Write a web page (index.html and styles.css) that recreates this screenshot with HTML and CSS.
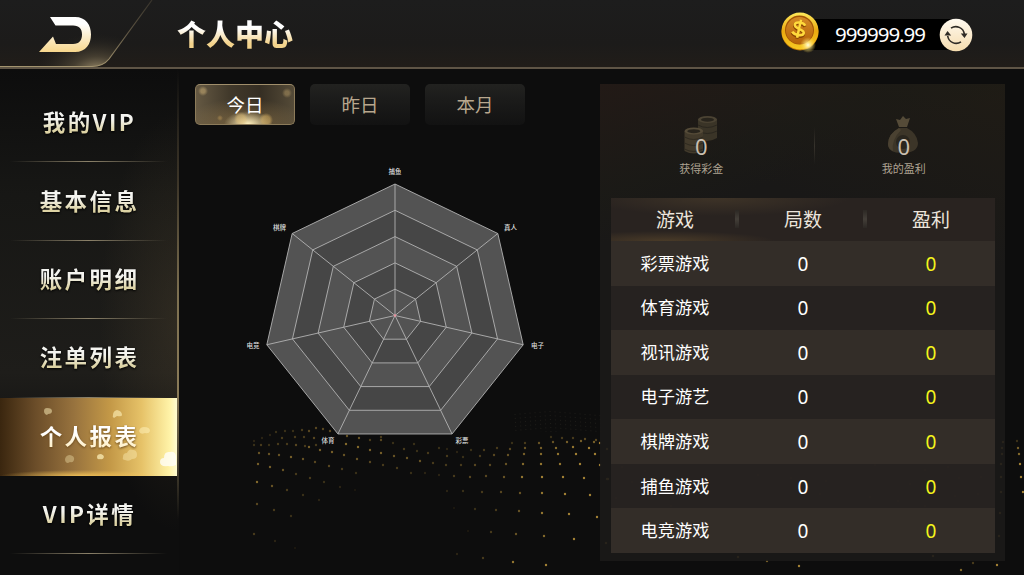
FILE: index.html
```html
<!DOCTYPE html>
<html lang="zh-CN">
<head>
<meta charset="UTF-8">
<meta name="viewport" content="width=device-width, initial-scale=1.0">
<title>个人中心</title>
<link rel="stylesheet" href="styles.css">
</head>
<body>
<svg class="particles" id="particles" width="1024" height="575" viewBox="0 0 1024 575"></svg>

<header class="header">
    <svg class="header-back" width="156" height="69" viewBox="0 0 156 69">
        <defs>
            <radialGradient id="cornerGlow" gradientUnits="userSpaceOnUse" cx="97" cy="72" r="62" gradientTransform="translate(0 28) scale(1 .6)">
                <stop offset="0" stop-color="#a39371"/>
                <stop offset=".4" stop-color="#554c3a" stop-opacity=".7"/>
                <stop offset="1" stop-color="#2a2721" stop-opacity="0"/>
            </radialGradient>
            <linearGradient id="edge" x1="0" y1="1" x2="0" y2="0">
                <stop offset="0" stop-color="#a3946f"/>
                <stop offset=".5" stop-color="#5e5543"/>
                <stop offset="1" stop-color="#37332b"/>
            </linearGradient>
            <linearGradient id="arrow" x1="0" y1="0" x2="0" y2="1">
                <stop offset=".2" stop-color="#ffffff"/>
                <stop offset="1" stop-color="#f7d68c"/>
            </linearGradient>
        </defs>
        <path d="M0 66.500H92Q103 66.500 109 59L152 0H0Z" fill="url(#cornerGlow)"/>
        <path d="M0 66.500H92Q103 66.500 109 59L152 0" fill="none" stroke="url(#edge)" stroke-width="1.200"/>
        <path d="M50 17H75C86 17 91 25 91 34.500C91 44 86 52 75 52H39L53 36.500L56 44H73C79.500 44 82 40 82 34.500C82 29 79.500 25.500 73 25.500H55.500Z" fill="url(#arrow)"/>
    </svg>
    <h1 class="header-title">个人中心</h1>
    <div class="balance">
        <svg class="balance-coin" width="40" height="42" viewBox="0 0 40 42">
            <defs>
                <linearGradient id="rim" x1="0" y1="0" x2="0" y2="1">
                    <stop offset="0" stop-color="#ffe95a"/>
                    <stop offset=".5" stop-color="#eaa910"/>
                    <stop offset="1" stop-color="#f8c922"/>
                </linearGradient>
                <linearGradient id="face" x1="0" y1="0" x2="0" y2="1">
                    <stop offset="0" stop-color="#d48a25"/>
                    <stop offset="1" stop-color="#b5620a"/>
                </linearGradient>
                <radialGradient id="spark">
                    <stop offset="0" stop-color="#fffde0"/>
                    <stop offset=".4" stop-color="#ffe98a" stop-opacity=".7"/>
                    <stop offset="1" stop-color="#ffd84a" stop-opacity="0"/>
                </radialGradient>
            </defs>
            <circle cx="20" cy="21" r="18.500" fill="#c07a08"/>
            <circle cx="20" cy="20" r="18.500" fill="url(#rim)"/>
            <circle cx="19.500" cy="19" r="14.500" fill="#a35407"/>
            <circle cx="19.500" cy="19.500" r="13.500" fill="url(#face)"/>
            <g fill="none" transform="rotate(12 19 18)">
                <path d="M24.500 14.500C22 11.500 14 12 14 15.500C14 20 24.500 18 24.500 22C24.500 26 15.500 26 13 23M19 9.500V28" stroke="#8a4504" stroke-width="3.200"/>
                <path d="M24.500 13.500C22 10.500 14 11 14 14.500C14 19 24.500 17 24.500 21C24.500 25 15.500 25 13 22M19 8.500V27" stroke="#ffd93c" stroke-width="2.600"/>
            </g>
            <circle cx="28" cy="34" r="8" fill="url(#spark)"/>
        </svg>
        <span class="balance-value">999999.99</span>
        <svg class="balance-refresh" width="34" height="34" viewBox="0 0 34 34">
            <defs>
                <linearGradient id="refreshBg" x1="0" y1="0" x2="0" y2="1">
                    <stop offset="0" stop-color="#fffaf0"/>
                    <stop offset="1" stop-color="#f5dcae"/>
                </linearGradient>
            </defs>
            <circle cx="17" cy="17" r="16.300" fill="url(#refreshBg)"/>
            <path d="M12 10.200A8.500 8.500 0 0 1 25.300 16M22 23.800A8.500 8.500 0 0 1 8.700 18" fill="none" stroke="#2f2b26" stroke-width="1.600"/>
            <path d="M21.800 15.500H28.500L25.500 20ZM12.200 17.500H5.500L8.500 13Z" fill="#2f2b26"/>
        </svg>
    </div>
</header>

<div class="page">
    <nav class="sidebar">
        <a class="sidebar-item"><span>我的VIP</span></a>
        <a class="sidebar-item"><span>基本信息</span></a>
        <a class="sidebar-item"><span>账户明细</span></a>
        <a class="sidebar-item"><span>注单列表</span></a>
        <a class="sidebar-item active">
            <svg class="petals" width="177" height="79" viewBox="0 0 177 79">
                <g fill="#fff3bd">
                    <path d="M44 13q0-3 3-3 5 0 5 3 0 3-4 3l-1 1q-3-1-3-4z" opacity=".5"/>
                    <path d="M113 17q0-4 4-5 5 1 5 5 0 2-5 1l-3 2q-2-1-1-3z" opacity=".6"/>
                    <path d="M65 61q1-4 5-4 5 1 4 5-1 3-4 2l-2 1q-3 0-3-4z" opacity=".35"/>
                    <path d="M97 59q0-3 4-3 3 1 3 3-1 3-4 2-3 1-3-2z" opacity=".7"/>
                    <path d="M123 59q0-4 4-4 2-5 6-3 4 0 4 5 0 4-5 4-3 3-7 1-3 0-2-3z" opacity=".4"/>
                    <path d="M139 33q1-4 5-4 6 0 6 4-1 3-5 2-5 2-6-2z" opacity=".5"/>
                    <path d="M160 64q0-4 4-4 0-7 6-6 5-1 6 4v9q-4 2-8 1-8 1-8-4z" fill="#ffffff" opacity=".75"/>
                </g>
            </svg>
            <span>个人报表</span>
        </a>
        <a class="sidebar-item"><span>VIP详情</span></a>
    </nav>

    <main class="report">
        <div class="tabs">
            <button class="tab active">今日</button>
            <button class="tab">昨日</button>
            <button class="tab">本月</button>
        </div>
        <svg class="radar" id="radar" width="330" height="300" viewBox="230 160 330 300"></svg>
    </main>

    <section class="panel">
        <div class="summary">
            <div class="summary-item">
                <svg class="summary-icon" width="36" height="40" viewBox="0 0 36 40">
                    <path d="M15 4V24Q24 29 34 23V4Z" fill="#3a3427"/>
                    <ellipse cx="24.500" cy="4.500" rx="9.500" ry="3.500" fill="#4b4333"/>
                    <ellipse cx="24.500" cy="4.700" rx="6.500" ry="2" fill="#28241c"/>
                    <path d="M15 10q9 5 19 0M15 16q9 5 19 0" fill="none" stroke="#2a261e"/>
                    <path d="M1.500 16V36Q11 41 20 36V16Z" fill="#423a2b"/>
                    <ellipse cx="10.800" cy="16" rx="9.300" ry="3.500" fill="#554b38"/>
                    <ellipse cx="10.800" cy="16.200" rx="6.500" ry="2" fill="#28241c"/>
                    <path d="M1.500 22q9 5 18.500 0M1.500 28q9 5 18.500 0M1.500 34q9 5 18.500 0" fill="none" stroke="#2f2a20"/>
                </svg>
                <div class="summary-value">0</div>
                <div class="summary-label">获得彩金</div>
            </div>
            <div class="summary-item">
                <svg class="summary-icon" width="36" height="40" viewBox="0 0 36 40">
                    <path d="M13 12L10 4L14 5L17 1L20 4L24 3L21 12Z" fill="#554b38"/>
                    <path d="M13 13Q2 19 2 29Q2 38 16 38Q32 38 32 28Q31 18 21 13Z" fill="#3c3528"/>
                    <path d="M13 13Q2 19 2 29Q2 34 7 36Q5 25 15 15Z" fill="#4a4131"/>
                    <circle cx="17" cy="27" r="7" fill="#2a261e"/>
                </svg>
                <div class="summary-value">0</div>
                <div class="summary-label">我的盈利</div>
            </div>
        </div>
        <table class="games">
            <thead>
                <tr><th>游戏</th><th>局数</th><th>盈利</th></tr>
            </thead>
            <tbody>
                <tr><td>彩票游戏</td><td>0</td><td>0</td></tr>
                <tr><td>体育游戏</td><td>0</td><td>0</td></tr>
                <tr><td>视讯游戏</td><td>0</td><td>0</td></tr>
                <tr><td>电子游艺</td><td>0</td><td>0</td></tr>
                <tr><td>棋牌游戏</td><td>0</td><td>0</td></tr>
                <tr><td>捕鱼游戏</td><td>0</td><td>0</td></tr>
                <tr><td>电竞游戏</td><td>0</td><td>0</td></tr>
            </tbody>
        </table>
    </section>
</div>

<script src="script.js"></script>
</body>
</html>
```
FILE: styles.css
```css
* {
    box-sizing: border-box;
}
body {
    width: 1024px;
    height: 575px;
    margin: 0;
    overflow: hidden;
    position: relative;
    background-color: #0d0d0d;
    color: #ffffff;
    font-family: "Noto Sans", "Noto Sans CJK SC", sans-serif;
}
.particles {
    position: absolute;
    left: 0;
    top: 0;
}

/* header */
.header {
    display: flex;
    align-items: center;
    position: relative;
    height: 69px;
    background: linear-gradient(#1d1d1d, #1c1b1a 65%, #211d19);
    border-bottom: 2px solid #5f5546;
}
.header-back {
    align-self: flex-start;
    flex: none;
}
.header-title {
    margin: 0 0 0 21px;
    font-family: "Noto Sans CJK SC", sans-serif;
    font-size: 29px;
    font-weight: 900;
    line-height: 44px;
    padding-bottom: 1px;
    background: linear-gradient(#ffffff 38%, #f3d38c 72%);
    -webkit-background-clip: text;
    background-clip: text;
    color: transparent;
}
.balance {
    display: flex;
    align-items: center;
    width: 193px;
    height: 31px;
    margin-left: auto;
    margin-right: 51px;
    margin-top: 2px;
    background: linear-gradient(90deg, transparent 8%, #000000 8%, #000000 92%, transparent 92%);
}
.balance-coin {
    flex: none;
    margin-top: -5px;
}
.balance-value {
    flex: 1;
    padding-left: 15px;
    font-size: 20.5px;
    letter-spacing: -1.05px;
    line-height: 31px;
}
.balance-refresh {
    flex: none;
}

.page {
    display: flex;
    position: relative;
    height: 506px;
}

/* left menu */
.sidebar {
    position: relative;
    width: 179px;
    flex: none;
    padding-top: 15px;
    background:
        radial-gradient(ellipse 80px 210px at 100% 50%, rgba(90, 76, 52, 0.3), transparent),
        linear-gradient(#0d0d0d, #171715 25%, #1e1d1a 60%, #0e0e0e 80%);
}
.sidebar::after {
    content: "";
    position: absolute;
    right: 0;
    top: 0;
    width: 2px;
    height: 450px;
    background: linear-gradient(transparent, #3c3528 25%, #7d7051 50%, #8a7b58 72%, transparent);
}
.sidebar-item {
    display: flex;
    align-items: center;
    justify-content: center;
    position: relative;
    width: 177px;
    height: 78.4px;
    padding-bottom: 4px;
    font-family: "Noto Sans CJK SC", sans-serif;
    font-size: 22.5px;
    font-weight: 700;
    letter-spacing: 2.4px;
    line-height: 36px;
}
.sidebar-item::after {
    content: "";
    position: absolute;
    left: 10px;
    right: 10px;
    bottom: 0;
    height: 1px;
    background: linear-gradient(90deg, transparent, #8b8169 50%, transparent);
}
.sidebar-item span {
    position: relative;
    padding-left: 2px;
    background: linear-gradient(#f4f4f0 45%, #ddd3a4 78%);
    -webkit-background-clip: text;
    background-clip: text;
    color: transparent;
    filter: drop-shadow(0 1px 1px #000000);
}
.sidebar-item.active {
    background:
        radial-gradient(ellipse 80px 6px at 45% 100%, rgba(255, 205, 90, 0.8), transparent),
        linear-gradient(90deg, #3a260f 0%, #6b4d29 20%, #98733e 42%, #c39847 62%, #e6c268 80%, #fff3a8 96%, #fffbd0);
}
.sidebar-item.active::after {
    display: none;
}
.sidebar-item.active span {
    background-image: linear-gradient(#ffffff 45%, #fff2cf 78%);
    filter: drop-shadow(0 1px 1px #6b4a1c);
}
.petals {
    position: absolute;
    left: 0;
    top: 0;
    filter: blur(0.6px);
}

/* radar */
.report {
    width: 421px;
    flex: none;
    padding: 15px 0 0 16px;
}
.tabs {
    display: flex;
    gap: 15px;
}
.tab {
    width: 100px;
    height: 41px;
    padding: 0 0 1px;
    border: none;
    border-radius: 5px;
    background: linear-gradient(#222220, #1b1b1a 40%, #121212);
    color: #b8a78e;
    font-family: "Noto Sans CJK SC", sans-serif;
    font-size: 18.5px;
}
.tab.active {
    border: 1px solid #8c7b5a;
    border-top-color: #a08e6b;
    background:
        radial-gradient(circle at 7px 6px, rgba(210, 180, 120, 0.5) 2px, transparent 5px),
        radial-gradient(circle at 91px 8px, rgba(200, 170, 110, 0.4) 2px, transparent 5px),
        radial-gradient(circle at 45px 34px, rgba(230, 195, 120, 0.45) 4px, transparent 7px),
        radial-gradient(circle at 70px 35px, rgba(220, 180, 100, 0.5) 4px, transparent 7px),
        radial-gradient(circle at 24px 33px, rgba(200, 160, 90, 0.4) 1px, transparent 3px),
        radial-gradient(ellipse 24px 13px at 52px 100%, #fff0bd, transparent),
        radial-gradient(ellipse 60px 26px at 50% 100%, rgba(160, 130, 80, 0.6), transparent),
        linear-gradient(90deg, #655943, #40382a 35%, #352e23 65%, #554b38);
    color: #ffffff;
}
.radar {
    display: block;
    margin: 35px 0 0 35px;
}
.radar text {
    fill: #dcdcdc;
    font-family: "Noto Sans CJK SC", sans-serif;
    font-size: 6.5px;
    font-weight: 500;
    text-anchor: middle;
}

/* right panel */
.panel {
    width: 405px;
    height: 477px;
    flex: none;
    margin-top: 15px;
    padding: 0 10px 0 11px;
    background:
        linear-gradient(160deg, rgba(35, 26, 22, 0.9), rgba(28, 27, 22, 0.6) 18%, transparent 26%),
        linear-gradient(200deg, rgba(32, 28, 21, 0.9), transparent 30%),
        rgba(27, 25, 24, 0.9);
}
.summary {
    display: flex;
    height: 114px;
    margin: 0 -10px 0 -11px;
    padding-top: 31px;
}
.summary-item {
    position: relative;
    flex: 1;
    text-align: center;
    color: #c9bfb0;
}
.summary-item + .summary-item::before {
    content: "";
    position: absolute;
    left: 11px;
    top: 12px;
    width: 1px;
    height: 38px;
    background: linear-gradient(transparent, #37332c, transparent);
}
.summary-icon {
    display: block;
    margin: 0 auto;
}
.summary-value {
    margin-top: -24px;
    font-size: 22px;
    line-height: 30px;
}
.summary-label {
    margin-top: -1px;
    font-family: "Noto Sans CJK SC", sans-serif;
    font-size: 11px;
    line-height: 16px;
    color: #aea392;
}
.games {
    width: 384px;
    table-layout: fixed;
    border-collapse: separate;
    border-spacing: 0;
    text-align: center;
}
.games thead {
    background:
        radial-gradient(ellipse 130px 18px at 28% 0, rgba(82, 67, 46, 0.5), transparent),
        radial-gradient(ellipse 110px 10px at 14% 100%, rgba(100, 78, 46, 0.55), transparent),
        #292320;
}
.games th {
    position: relative;
    height: 43px;
    padding: 0 0 1px;
    font-size: 19px;
    font-weight: 400;
    color: #ece5dc;
}
.games th + th::before {
    content: "";
    position: absolute;
    left: -4px;
    top: 12px;
    width: 4px;
    height: 18px;
    background: linear-gradient(#2c2824, #433e38, #2c2824);
}
.games td {
    height: 44.57px;
    padding: 1px 0 0;
    font-size: 17.2px;
    line-height: 26px;
    color: #ffffff;
}
.games td + td {
    font-size: 19px;
}
.games td:last-child {
    color: #f4f41c;
}
.games tbody tr {
    background-color: rgba(40, 35, 33, 0.9);
}
.games tbody tr:nth-child(odd) {
    background-color: #332d28;
}
```
FILE: script.js
```js
var NS = 'http://www.w3.org/2000/svg';

function add(parent, tag, attrs) {
    var el = document.createElementNS(NS, tag);
    for (var key in attrs) {
        el.setAttribute(key, attrs[key]);
    }
    parent.appendChild(el);
    return el;
}

// radar chart
var radar = document.getElementById('radar');
var cx = 395, cy = 315.5, radius = 131.5;
var labels = [
    ['捕鱼', 395, 174],
    ['真人', 510.5, 230],
    ['电子', 537.5, 348],
    ['彩票', 462, 442.5],
    ['体育', 328, 442.5],
    ['电竞', 253, 348],
    ['棋牌', 279.5, 230]
];

function corner(i, r) {
    var a = Math.PI * 2 * i / 7;
    return [cx + Math.sin(a) * r, cy - Math.cos(a) * r];
}

for (var level = 5; level > 0; level--) {
    var points = [];
    for (var i = 0; i < 7; i++) {
        points.push(corner(i, radius * level / 5).join(','));
    }
    add(radar, 'polygon', {
        points: points.join(' '),
        fill: level % 2 ? '#535353' : '#464646',
        stroke: '#b2b2b2',
        'stroke-width': 0.9
    });
}
for (var j = 0; j < 7; j++) {
    var p = corner(j, radius);
    add(radar, 'line', {x1: cx, y1: cy, x2: p[0], y2: p[1], stroke: '#b2b2b2', 'stroke-width': 0.9});
    add(radar, 'text', {x: labels[j][1], y: labels[j][2]}).textContent = labels[j][0];
}
add(radar, 'circle', {cx: cx, cy: cy, r: 1.2, fill: '#e8909c'});

// gold particles: x, y, opacity
var dots = [
    [254,445,.3],[261,445,.4],[269,445,.3],[278,444,.4],[287,444,.4],[296,445,.5],[305,446,.4],[316,445,.4],[254,441,.2],[262,438,.2],[270,435,.2],[276,432,.3],[285,431,.3],[293,431,.3],[302,430,.4],[309,431,.5],[316,428,.5],[323,429,.5],[330,431,.5],
    [282,438,.4],[295,437,.4],[304,437,.4],[314,438,.5],[347,436,.6],[359,438,.6],[370,440,.4],[381,437,.4],
    [259,453,.6],[269,454,.6],[279,455,.6],[291,457,.7],[303,459,.6],[315,462,.5],[329,466,.5],[342,469,.4],[356,473,.3],
    [309,447,.7],[320,450,.7],[332,452,.7],[344,455,.6],[357,459,.6],[370,462,.5],[383,465,.4],[397,468,.4],[411,473,.3],[425,473,.2],[439,475,.2],
    [346,444,.8],[358,447,.8],[370,450,.7],[381,453,.7],[394,456,.6],[407,458,.6],[420,461,.6],[433,463,.4],[446,465,.4],[454,476,.4],[470,477,.5],[486,476,.5],[504,477,.6],[522,477,.9],[542,477,1],[563,477,1],[584,478,1],[607,479,1],
    [381,440,.5],[393,443,.3],[404,449,.4],[414,444,.3],[417,451,.3],[428,453,.4],[439,448,.3],[447,456,.4],[461,465,.4],[475,465,.5],[490,465,.5],[506,464,.6],[523,464,.8],[541,464,.9],[560,464,.9],[580,464,1],[600,465,1],
    [447,449,.2],[457,452,.2],[463,457,.3],[471,450,.3],[480,456,.4],[494,455,.5],[508,455,.6],[524,454,.7],[541,454,.8],[558,454,.9],[576,454,1],[595,454,1],
    [484,450,.4],[497,448,.4],[510,449,.5],[525,448,.6],[541,448,.7],[556,448,.8],[573,447,.9],[589,448,1],
    [512,443,.3],[525,443,.4],[539,443,.6],[553,442,.6],[567,442,.7],[581,441,.7],[594,442,.7],[551,437,.3],[562,438,.4],[573,438,.4],[585,439,.5],[596,440,.5],
    [258,464,.7],[270,467,.7],[283,470,.6],[296,474,.4],[310,478,.4],[324,482,.3],[340,487,.2],[355,490,.1],
    [257,482,.8],[272,486,.6],[287,490,.4],[303,495,.3],[319,500,.2],[257,504,.5],[274,510,.4],[291,516,.3],[254,534,.4],[275,541,.2],[295,548,.1],
    [447,491,.2],[463,491,.3],[482,492,.4],[501,492,.5],[520,493,.6],[542,493,.9],[565,494,1],[590,495,1],
    [454,508,.1],[475,509,.3],[496,510,.4],[519,511,.6],[542,513,.9],[569,514,1],[597,517,1],
    [468,531,.1],[491,532,.4],[516,534,.6],[544,536,.8],[574,539,1],[606,543,1],[457,554,.2],[483,558,.4],[513,562,.9],[546,565,1],
    [600,443,1],[607,449,1],[622,467,1],[608,479,1],[632,482,1],[616,498,1],[645,471,1],[671,506,1],[758,475,1],[791,478,1],[826,481,1],[875,465,1],[910,484,1],[925,470,1],[948,467,1],[959,478,1],[981,477,1],[955,496,1],[978,494,1],[898,501,1],[870,497,1],[820,494,1],[925,506,1],[738,557,1],[767,561,.7],[799,566,1],[933,556,1],[961,570,.8],[973,563,.4],[997,565,1],
    [1003,442,1],[1002,448,1],[1002,454,1],[1001,464,1],[1001,477,1],[1001,492,1],[1000,513,1],[999,536,1],
    [1017,441,.3],[1018,448,.7],[1019,454,.8],[1020,464,1],[1021,477,1],[1023,492,1]
];
var box = document.getElementById('particles');
dots.forEach(function(d) {
    add(box, 'circle', {cx: d[0], cy: d[1], r: 1.2, fill: '#a38235', opacity: d[2]});
});
// faint far wave behind the panel edge
for (var x = 515; x < 605; x += 5) {
    add(box, 'line', {
        x1: x, y1: 411 + Math.abs(x - 550) / 12,
        x2: x + 1, y2: 432,
        stroke: '#66604c', 'stroke-dasharray': '1 3', opacity: 0.2
    });
}
```
